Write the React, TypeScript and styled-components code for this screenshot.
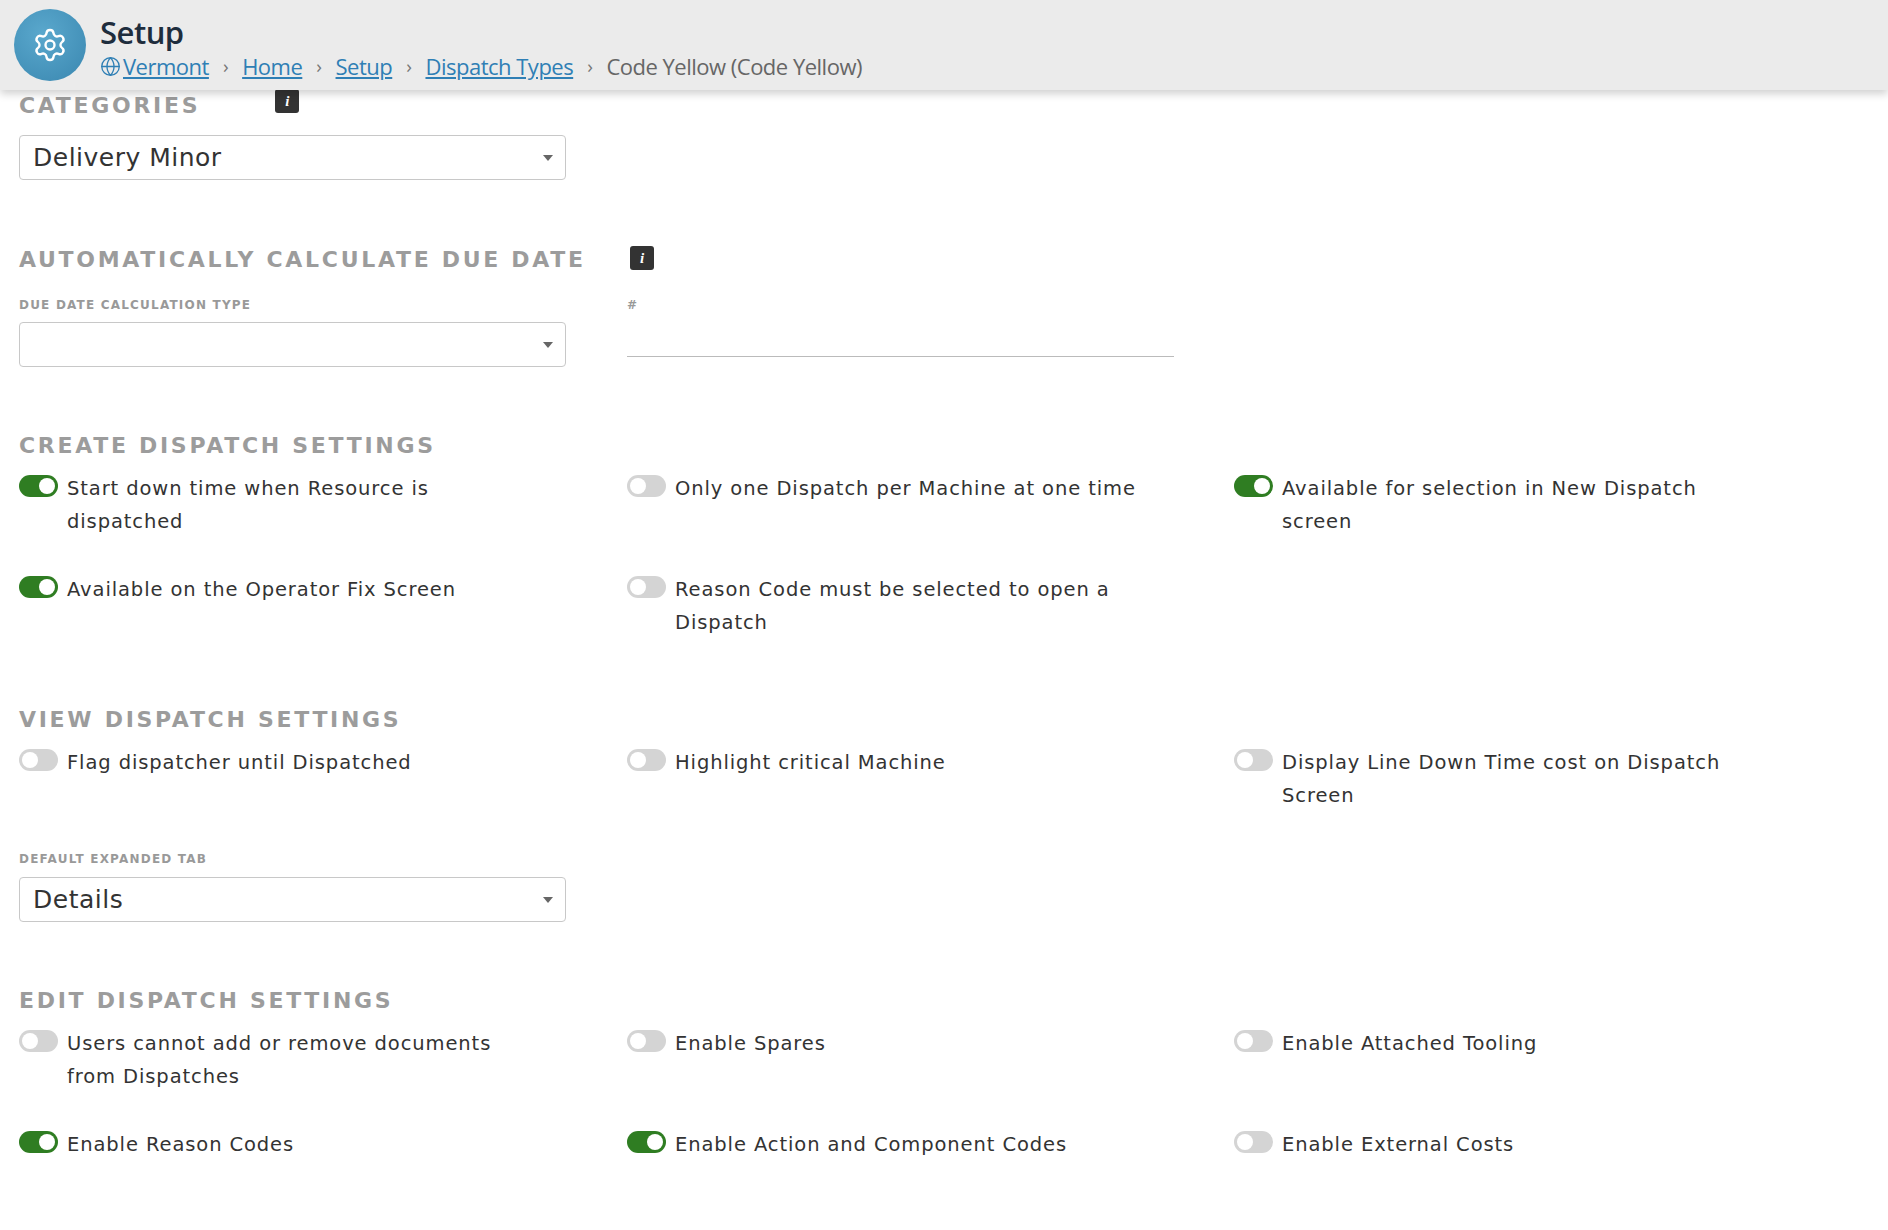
import React from "react";
import styled, { createGlobalStyle } from "styled-components";
import { Settings, Globe } from "lucide-react";

const GlobalStyle = createGlobalStyle`
  body { margin: 0; background: #fff; font-family: "DejaVu Sans", Verdana, sans-serif; }
`;

const Header = styled.header`
  height: 90px;
  background: #ebebeb;
  box-shadow: 0 4px 8px rgba(0, 0, 0, 0.18);
  display: flex;
  align-items: center;
  padding-left: 14px;
  gap: 14px;
  position: relative;
  z-index: 2;
`;

const IconCircle = styled.div`
  width: 72px;
  height: 72px;
  border-radius: 50%;
  background: radial-gradient(circle at 40% 35%, #5aa8cd, #3a87b0);
  display: flex;
  align-items: center;
  justify-content: center;
  color: #fff;
`;

const TitleBox = styled.div`
  display: flex;
  flex-direction: column;
  font-family: "Open Sans", "Noto Sans", sans-serif;
  margin-top: 4px;
`;

const Title = styled.div`
  font-size: 31px;
  font-weight: 600;
  color: #1e2d3d;
  line-height: 38px;
  letter-spacing: -0.5px;
`;

const Crumbs = styled.div`
  display: flex;
  align-items: center;
  font-size: 22px;
  color: #666;
  letter-spacing: -0.5px;
  gap: 14px;
`;

const Crumb = styled.a`
  color: #2f7fb5;
  text-decoration: underline;
  display: inline-flex;
  align-items: center;
  gap: 2px;
`;

const Sep = styled.span`
  color: #777;
  font-size: 19px;
`;

const Content = styled.main`
  padding: 3px 20px 40px 19px;
`;

const Grid = styled.div`
  display: grid;
  grid-template-columns: 608px 607px 560px;
  row-gap: 36px;
`;

const HeadingRow = styled(Grid)<{ $top: number }>`
  margin-top: ${(p) => p.$top}px;
  align-items: center;
`;

const Heading = styled.h2`
  margin: 0;
  font-size: 22px;
  line-height: 26px;
  font-weight: 700;
  letter-spacing: 2.7px;
  color: #9c9c9c;
  white-space: nowrap;
`;

const Info = styled.span<{ $shift?: number }>`
  width: 24px;
  height: 24px;
  border-radius: 3px;
  background: #333;
  color: #fff;
  font-size: 15px;
  font-style: italic;
  font-weight: 700;
  display: inline-flex;
  align-items: center;
  justify-content: center;
  font-family: "Liberation Serif", serif;
  letter-spacing: 0;
  margin-left: ${(p) => p.$shift ?? 0}px;
  margin-top: -4px;
  vertical-align: top;
`;

const Small = styled.div`
  font-size: 12px;
  letter-spacing: 1.2px;
  color: #999;
  font-weight: 600;
  line-height: 14px;
`;

const Select = styled.div<{ $top: number }>`
  margin-top: ${(p) => p.$top}px;
  width: 547px;
  height: 45px;
  box-sizing: border-box;
  border: 1px solid #c8c8c8;
  border-radius: 4px;
  display: flex;
  align-items: center;
  padding: 0 12px 0 13px;
  font-size: 25px;
  letter-spacing: 0.5px;
  color: #333;
  &::after {
    content: "";
    margin-left: auto;
    border-left: 5px solid transparent;
    border-right: 5px solid transparent;
    border-top: 6px solid #666;
  }
`;

const DueRow = styled(Grid)`
  margin-top: 25px;
`;

const UnderInput = styled.div`
  width: 547px;
  margin-top: 10px;
  height: 34px;
  border-bottom: 1px solid #bbb;
`;

const Options = styled(Grid)`
  margin-top: 14px;
`;

const Option = styled.div`
  display: flex;
  align-items: flex-start;
  gap: 9px;
  font-size: 19.5px;
  letter-spacing: 0.9px;
  line-height: 32.5px;
  color: #333;
`;

const Toggle = styled.span<{ $on: boolean }>`
  flex: none;
  width: 39px;
  height: 22px;
  margin-top: 2px;
  border-radius: 11px;
  background: ${(p) => (p.$on ? "#2f7d22" : "#d4d4d4")};
  position: relative;
  &::after {
    content: "";
    position: absolute;
    top: 3px;
    left: ${(p) => (p.$on ? "20px" : "3px")};
    width: 16px;
    height: 16px;
    border-radius: 50%;
    background: #fff;
  }
`;

const OptText = styled.span`
  max-width: 470px;
`;

type Opt = [boolean, string] | null;

const OptionGrid = ({ items }: { items: Opt[] }) => (
  <Options>
    {items.map((o, i) =>
      o ? (
        <Option key={i}>
          <Toggle $on={o[0]} />
          <OptText>{o[1]}</OptText>
        </Option>
      ) : (
        <div key={i} />
      )
    )}
  </Options>
);

export default function App() {
  return (
    <>
      <GlobalStyle />
      <Header>
        <IconCircle>
          <Settings size={36} strokeWidth={1.6} />
        </IconCircle>
        <TitleBox>
          <Title>Setup</Title>
          <Crumbs>
            <Crumb>
              <Globe size={21} strokeWidth={1.5} />
              Vermont
            </Crumb>
            <Sep>›</Sep>
            <Crumb>Home</Crumb>
            <Sep>›</Sep>
            <Crumb>Setup</Crumb>
            <Sep>›</Sep>
            <Crumb>Dispatch Types</Crumb>
            <Sep>›</Sep>
            <span>Code Yellow (Code Yellow)</span>
          </Crumbs>
        </TitleBox>
      </Header>
      <Content>
        <HeadingRow $top={0}>
          <Heading>
            CATEGORIES
            <Info $shift={75}>i</Info>
          </Heading>
        </HeadingRow>
        <Select $top={16}>Delivery Minor</Select>

        <HeadingRow $top={67}>
          <Heading>AUTOMATICALLY CALCULATE DUE DATE</Heading>
          <div>
            <Info $shift={3}>i</Info>
          </div>
        </HeadingRow>
        <DueRow>
          <div>
            <Small>DUE DATE CALCULATION TYPE</Small>
            <Select $top={10} />
          </div>
          <div>
            <Small>#</Small>
            <UnderInput />
          </div>
        </DueRow>

        <HeadingRow $top={66}>
          <Heading>CREATE DISPATCH SETTINGS</Heading>
        </HeadingRow>
        <OptionGrid
          items={[
            [true, "Start down time when Resource is dispatched"],
            [false, "Only one Dispatch per Machine at one time"],
            [true, "Available for selection in New Dispatch screen"],
            [true, "Available on the Operator Fix Screen"],
            [false, "Reason Code must be selected to open a Dispatch"],
            null,
          ]}
        />

        <HeadingRow $top={68}>
          <Heading>VIEW DISPATCH SETTINGS</Heading>
        </HeadingRow>
        <OptionGrid
          items={[
            [false, "Flag dispatcher until Dispatched"],
            [false, "Highlight critical Machine"],
            [false, "Display Line Down Time cost on Dispatch Screen"],
          ]}
        />
        <div style={{ marginTop: 40 }}>
          <Small>DEFAULT EXPANDED TAB</Small>
          <Select $top={11}>Details</Select>
        </div>

        <HeadingRow $top={66}>
          <Heading>EDIT DISPATCH SETTINGS</Heading>
        </HeadingRow>
        <OptionGrid
          items={[
            [false, "Users cannot add or remove documents from Dispatches"],
            [false, "Enable Spares"],
            [false, "Enable Attached Tooling"],
            [true, "Enable Reason Codes"],
            [true, "Enable Action and Component Codes"],
            [false, "Enable External Costs"],
          ]}
        />
      </Content>
    </>
  );
}
